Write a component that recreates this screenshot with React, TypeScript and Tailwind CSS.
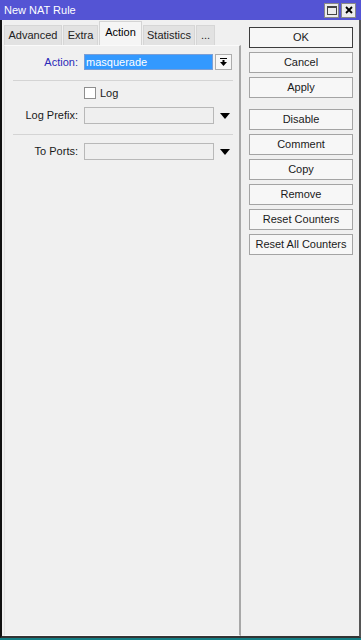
import React from "react";

const buttons: { label: string; gapBefore?: boolean; primary?: boolean }[] = [
  { label: "OK", primary: true },
  { label: "Cancel" },
  { label: "Apply" },
  { label: "Disable", gapBefore: true },
  { label: "Comment" },
  { label: "Copy" },
  { label: "Remove" },
  { label: "Reset Counters" },
  { label: "Reset All Counters" },
];

const tabs = [
  { label: "Advanced", width: "w-[58px]" },
  { label: "Extra", width: "w-[35px]" },
  { label: "Action", width: "w-[43px]", active: true },
  { label: "Statistics", width: "w-[52px]" },
  { label: "...", width: "w-[19px]" },
];

const DropTriangle = () => (
  <svg width="10" height="6" viewBox="0 0 10 6" className="ml-[6px]">
    <polygon points="0,0 10,0 5,6" fill="#000" />
  </svg>
);

const App: React.FC = () => {
  return (
    <div className="w-[361px] h-[640px] flex flex-col bg-[#137e84] font-['Liberation_Sans',Arial,sans-serif] text-[11px] text-[#1a1a1a]">
      {/* title bar */}
      <div className="h-[20px] bg-[#5454d4] flex items-center pl-[4px] pr-[5px]">
        <span className="text-white text-[11px] leading-none">New NAT Rule</span>
        <div className="ml-auto flex gap-[2px]">
          <div className="w-[15px] h-[15px] bg-[#ececec] border border-[#888] flex items-center justify-center">
            <div className="w-[10px] h-[9px] border border-[#444] border-t-2" />
          </div>
          <div className="w-[15px] h-[15px] bg-[#ececec] border border-[#888] flex items-center justify-center">
            <svg width="8" height="8" viewBox="0 0 8 8">
              <path d="M1 1 L7 7 M7 1 L1 7" stroke="#000" strokeWidth="1.8" />
            </svg>
          </div>
        </div>
      </div>

      {/* window body */}
      <div className="flex-1 flex bg-[#f0f0f0] border-l-2 border-r-2 border-b-2 border-l-[#111] border-r-[#555] border-b-[#333]">
        {/* left: tabs + panel */}
        <div className="w-[239px] flex flex-col">
          <div className="h-[25px] flex items-end pl-[2px] gap-[1px]">
            {tabs.map((t) =>
              t.active ? (
                <div
                  key={t.label}
                  className={`${t.width} h-[24px] bg-[#f5f5f5] border-x border-t border-[#d4d4d4] flex items-center justify-center pb-[3px] text-[#000]`}
                >
                  {t.label}
                </div>
              ) : (
                <div
                  key={t.label}
                  className={`${t.width} h-[20px] bg-[#e2e2e2] border border-b-0 border-[#d6d6d6] flex items-center justify-center text-[#222]`}
                >
                  {t.label}
                </div>
              )
            )}
          </div>

          <div className="flex-1 ml-[2px] border-l border-t border-r-2 border-b border-l-[#e2e2e2] border-t-[#fafafa] border-r-[#a8a8a8] border-b-[#fafafa] bg-[#f0f0f0] pt-[8px]">
            {/* Action */}
            <div className="flex items-center h-[16px]">
              <span className="w-[73px] text-right text-[#2a2ab8]">Action:</span>
              <div className="ml-[6px] w-[129px] h-[16px] bg-[#3399ff] border border-[#7a9ed6] flex items-center pl-[1px] text-white">
                masquerade
              </div>
              <div className="ml-[2px] w-[17px] h-[16px] bg-[#f7f7f7] border border-[#adadad] flex items-center justify-center">
                <svg width="7" height="8" viewBox="0 0 7 8">
                  <rect x="0" y="0" width="7" height="1" fill="#000" />
                  <rect x="2.5" y="2" width="2" height="3" fill="#000" />
                  <polygon points="0,4 7,4 3.5,8" fill="#000" />
                </svg>
              </div>
            </div>

            <div className="ml-[8px] w-[220px] h-[1px] bg-[#d4d4d4] mt-[10px]" />

            {/* Log */}
            <div className="flex items-center mt-[6px] ml-[79px] h-[12px]">
              <div className="w-[12px] h-[12px] bg-white border border-[#8e8e8e]" />
              <span className="ml-[4px]">Log</span>
            </div>

            {/* Log Prefix */}
            <div className="flex items-center h-[17px] mt-[8px]">
              <span className="w-[73px] text-right">Log Prefix:</span>
              <div className="ml-[6px] w-[130px] h-[17px] bg-[#efefef] border border-[#b8b8b8]" />
              <DropTriangle />
            </div>

            <div className="ml-[8px] w-[220px] h-[1px] bg-[#d4d4d4] mt-[10px]" />

            {/* To Ports */}
            <div className="flex items-center h-[17px] mt-[8px]">
              <span className="w-[73px] text-right">To Ports:</span>
              <div className="ml-[6px] w-[130px] h-[17px] bg-[#efefef] border border-[#b8b8b8]" />
              <DropTriangle />
            </div>
          </div>
        </div>

        {/* right: buttons */}
        <div className="flex-1 flex flex-col pl-[8px] pt-[7px] gap-[4px]">
          {buttons.map((b) => (
            <button
              key={b.label}
              className={`w-[104px] h-[21px] flex items-center justify-center bg-[#f7f7f7] border text-[11px] text-[#1a1a1a] ${
                b.primary ? "border-[#3c3c3c]" : "border-[#a4a4a4]"
              } ${b.gapBefore ? "mt-[7px]" : ""}`}
            >
              {b.label}
            </button>
          ))}
        </div>
      </div>

      {/* desktop strip below the window */}
      <div className="h-[2px] bg-[#137e84]" />
    </div>
  );
};

export default App;
